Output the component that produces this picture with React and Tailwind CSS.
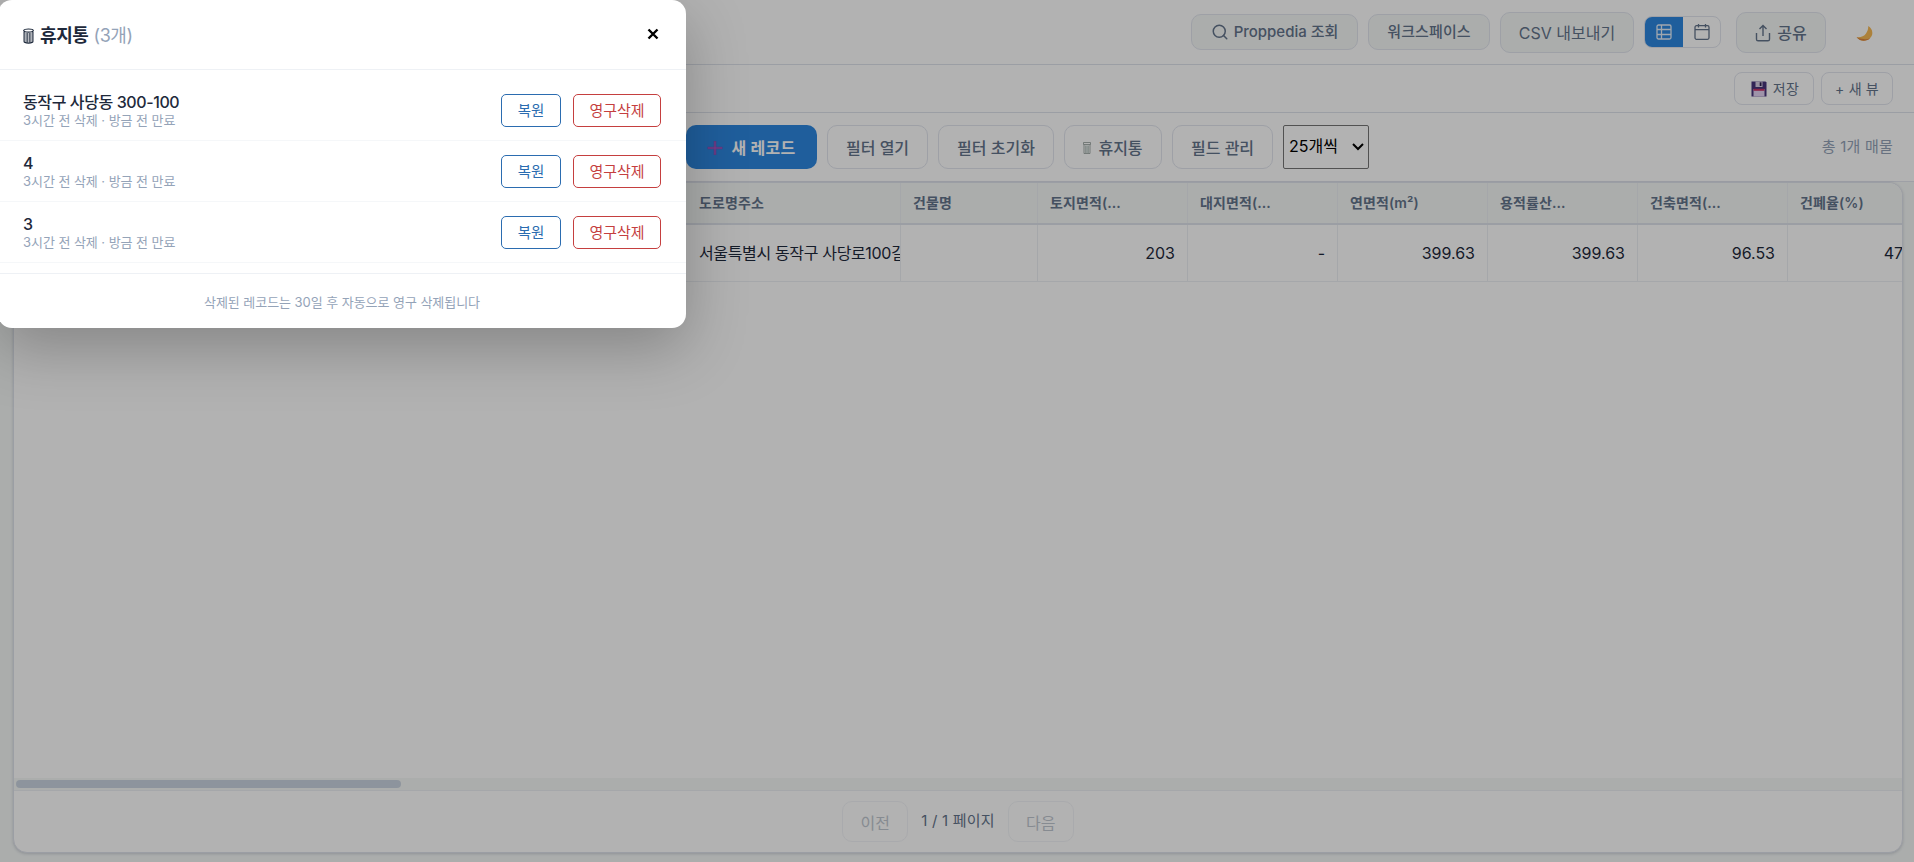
import React from "react";
import clsx from "clsx";
import { LuSearch } from "react-icons/lu";

const columns = [
  { label: "도로명주소", value: "서울특별시 동작구 사당로100길 12", width: "w-[214px]" },
  { label: "건물명", value: "", width: "w-[137px]" },
  { label: "토지면적(...", value: "203", width: "w-[150px]", number: true },
  { label: "대지면적(...", value: "-", width: "w-[150px]", number: true },
  { label: "연면적(m²)", value: "399.63", width: "w-[150px]", number: true },
  { label: "용적률산...", value: "399.63", width: "w-[150px]", number: true },
  { label: "건축면적(...", value: "96.53", width: "w-[150px]", number: true },
  { label: "건폐율(%)", value: "47.55", width: "w-[150px]", number: true },
];

const trashItems = [
  { name: "동작구 사당동 300-100", info: "3시간 전 삭제 · 방금 전 만료" },
  { name: "4", info: "3시간 전 삭제 · 방금 전 만료" },
  { name: "3", info: "3시간 전 삭제 · 방금 전 만료" },
];

const TrashIcon = ({ className }) => (
  <svg viewBox="0 0 11 16" className={className} fill="none" stroke="currentColor">
    <ellipse cx="5.5" cy="2.6" rx="4.8" ry="1.6" strokeWidth="1.2" />
    <path d="M1.1 4v9.600c0 1.900 8.800 1.900 8.800 0V4" strokeWidth="1.2" />
    <path d="M3.100 5v9.300M4.700 5v9.600M6.300 5v9.600M7.900 5v9.300" strokeWidth=".9" />
  </svg>
);

const SmallTrashIcon = () => (
  <svg viewBox="0 0 8 12" className="h-3 w-2" fill="none" stroke="#8f9a98" strokeWidth=".8">
    <path d="M.5.500h7v2h-7zM1 2.500v9h6v-9" />
    <path d="M2.700 3.500v7.500M4 3.500v7.500M5.300 3.500v7.500" stroke="#9fb0ab" />
  </svg>
);

const PlusIcon = () => (
  <svg viewBox="0 0 16 16" className="h-4 w-4">
    <path d="M8 1v14M.500 8h15" stroke="#7c50b4" strokeWidth="2.6" />
    <path d="M8 1.500v13M1 8h14" stroke="#b05ac8" strokeWidth="1" />
  </svg>
);

const FloppyIcon = () => (
  <svg viewBox="0 0 16 16" className="h-4 w-4">
    <path d="M.5.500h14l1 1v14H.5z" fill="#48347c" />
    <path d="M4.500.500h7v5.500h-7z" fill="#d9cfe6" />
    <path d="M8.700 1.300h1.800v3.700H8.700z" fill="#2c2050" />
    <path d="M2.500 8h11v7.500h-11z" fill="#e2d3f3" />
    <path d="M2.500 7.800h11v2h-11z" fill="#c83468" />
  </svg>
);

const MoonIcon = () => (
  <svg viewBox="0 0 17 17" className="h-[17px] w-[17px]">
    <path
      d="M12.200 1c3.600 2 5.300 6.500 3.300 10.300-2.600 5-10.500 6.300-14.900.9 4.300.4 7.400-.9 9.400-3.700 1.700-2.300 2.400-4.900 2.200-7.500z"
      fill="#f7b955"
    />
    <path d="M.6 12.200c3.900 4.800 10.500 4.300 13.700.8-2.200 1.200-4.400 1.500-6.800 1.100-2.400-.3-4.600-1-6.900-1.900z" fill="#dc8440" />
  </svg>
);

const TableIcon = () => (
  <svg viewBox="0 0 16 16" className="h-4 w-4" fill="none" stroke="currentColor" strokeWidth="1.3">
    <rect x="1" y="1" width="14" height="14" rx="1.5" />
    <path d="M1 5.500h14M1 10.500h14M5.500 1v14" />
  </svg>
);

const CalendarIcon = () => (
  <svg viewBox="0 0 16 16" className="h-4 w-4" fill="none" stroke="currentColor" strokeWidth="1.3">
    <rect x="1" y="1.700" width="14" height="13.600" rx="1.500" />
    <path d="M1 5.600h14M4.500 0v3.500M11.500 0v3.500" />
  </svg>
);

const ShareIcon = () => (
  <svg viewBox="0 0 16 18" className="h-[18px] w-4" fill="none" stroke="currentColor" strokeWidth="1.400">
    <path d="M1.500 9v6.200c0 1 .6 1.600 1.600 1.600h9.800c1 0 1.600-.6 1.600-1.600V9M8 12V1.500M4.500 5 8 1.500 11.500 5" />
  </svg>
);

const Button = ({ className, children }) => (
  <button
    className={clsx(
      "flex shrink-0 items-center justify-center whitespace-nowrap border border-[#e2e5ee] text-[#64748b]",
      className
    )}
  >
    {children}
  </button>
);

const TopBar = () => (
  <header className="flex h-[65px] shrink-0 items-center border-b border-[#dfe2eb] bg-white pr-[41px]">
    <div className="ml-auto flex items-center">
      <Button className="h-9 w-[167px] gap-[5px] rounded-[10px] bg-[#f5f8f7] text-[15px] font-medium">
        <LuSearch className="h-[18px] w-[18px]" />
        Proppedia 조회
      </Button>
      <Button className="ml-2.5 h-9 w-[122px] rounded-[10px] bg-[#f5f8f7] text-[15px] font-medium tracking-[0.1px]">
        워크스페이스
      </Button>
      <Button className="ml-2.5 h-[41px] w-[134px] rounded-[10px] bg-[#f5f8f7] pt-0.5 text-base">
        CSV 내보내기
      </Button>
      <div className="ml-2.5 flex h-8 w-[77px] overflow-hidden rounded-lg border border-[#e2e5ee] text-[#64748b]">
        <div className="flex w-[38px] items-center justify-center bg-[#2d87e0] text-[#e6f0fa]">
          <TableIcon />
        </div>
        <div className="flex flex-1 items-center justify-center">
          <CalendarIcon />
        </div>
      </div>
      <Button className="ml-[15px] h-[41px] w-[90px] gap-1.5 rounded-[10px] bg-[#f5f8f7] pt-0.5 text-base font-medium">
        <ShareIcon />
        공유
      </Button>
      <div className="ml-[30px] pt-0.5">
        <MoonIcon />
      </div>
    </div>
  </header>
);

const ViewBar = () => (
  <div className="flex h-12 shrink-0 items-center justify-end gap-[7px] border-b border-[#dfe2eb] bg-white pr-[21px]">
    <Button className="h-[33px] w-20 gap-1.5 rounded-lg pl-0.5 text-sm tracking-[0.3px]">
      <FloppyIcon />
      저장
    </Button>
    <Button className="h-[33px] w-[72px] rounded-lg text-sm tracking-[0.2px]">+ 새 뷰</Button>
  </div>
);

const Toolbar = () => (
  <div className="flex h-[69px] shrink-0 items-center border-b border-[#e2e5ee] bg-white pl-[686px] pr-[21px]">
    <button className="flex h-11 w-[131px] shrink-0 items-center justify-center gap-2 rounded-[10px] bg-[#2d87e0] pt-0.5 text-base font-bold tracking-[0.3px] text-white">
      <PlusIcon />새 레코드
    </button>
    <Button className="ml-2.5 h-11 w-[101px] rounded-[10px] pt-0.5 text-base font-medium">필터 열기</Button>
    <Button className="ml-2.5 h-11 w-[116px] rounded-[10px] pt-0.5 text-base font-medium">필터 초기화</Button>
    <Button className="ml-2.5 h-11 w-[98px] gap-[7px] rounded-[10px] pt-0.5 text-base font-medium">
      <SmallTrashIcon />
      휴지통
    </Button>
    <Button className="ml-2.5 h-11 w-[101px] rounded-[10px] pt-0.5 text-base font-medium">필드 관리</Button>
    <div className="ml-2.5 flex h-11 w-[86px] shrink-0 items-center justify-between rounded-[2px] border border-[#767676] pl-[5px] pr-1 text-base text-black">
      <span className="pb-0.5">25개씩</span>
      <svg viewBox="0 0 12 8" className="h-2 w-3" fill="none" stroke="black" strokeWidth="2">
        <path d="m1 1 5 5 5-5" />
      </svg>
    </div>
    <span className="ml-auto text-[15px] tracking-[0.2px] text-[#94a3b8]">총 1개 매물</span>
  </div>
);

const DataTable = () => (
  <div className="flex min-h-0 flex-1 bg-[#f5f8f7] pb-[9px] pl-[13px] pr-[11px]">
    <div className="flex w-full flex-col overflow-hidden rounded-[14px] border border-[#dfe2eb] bg-white shadow-[0_1px_3px_rgba(30,40,70,0.18)]">
      <div className="flex h-[42px] shrink-0 overflow-hidden border-b-2 border-[#dfe2eb] bg-[#f5f8f7]">
        <div className="w-[673px] shrink-0" />
        {columns.map((col) => (
          <div
            key={col.label}
            className={clsx(
              "flex shrink-0 items-center whitespace-nowrap border-r border-[#eceff4] pb-px pl-3 text-sm font-semibold tracking-[0.1px] text-[#64748b]",
              col.width
            )}
          >
            {col.label}
          </div>
        ))}
      </div>
      <div className="flex h-[57px] shrink-0 overflow-hidden border-b border-[#eceff4]">
        <div className="w-[673px] shrink-0" />
        {columns.map((col) => (
          <div
            key={col.label}
            className={clsx(
              "flex shrink-0 items-center overflow-hidden whitespace-nowrap border-r border-[#eceff4] pl-3 text-base text-[#1e293b]",
              col.width,
              col.number ? "justify-end pr-3" : "tracking-[-0.35px]"
            )}
          >
            {col.value}
          </div>
        ))}
      </div>
      <div className="flex-1" />
      <div className="h-3 shrink-0 bg-[#f5f8f7] p-0.5">
        <div className="h-2 w-[385px] rounded-full bg-[#cbd5e1]" />
      </div>
      <div className="flex h-[62px] shrink-0 items-center justify-center gap-[13px] border-t border-[#eceff4] text-base text-[#64748b]">
        <Button className="h-[41px] w-[66px] rounded-[10px] pt-0.5 opacity-40">이전</Button>
        <span className="text-[15px] tracking-[0.2px]">1 / 1 페이지</span>
        <Button className="h-[41px] w-[66px] rounded-[10px] pt-0.5 opacity-40">다음</Button>
      </div>
    </div>
  </div>
);

const TrashModal = () => (
  <div className="-ml-0.5 h-[328px] w-[688px] overflow-hidden rounded-[14px] bg-white shadow-[0_20px_60px_rgba(0,0,0,0.25)]">
    <div className="flex h-[70px] items-center justify-between border-b border-[#eef1f5] pl-[25px] pr-[27px]">
      <h3 className="flex items-center pt-0.5 text-lg font-bold tracking-[-0.4px] text-[#1e293b]">
        <TrashIcon className="mr-1.5 h-4 w-[11px]" />
        휴지통
        <span className="ml-[5px] font-normal text-[#94a3b8]">(3개)</span>
      </h3>
      <svg viewBox="0 0 12 12" className="mb-0.5 h-3 w-3" stroke="black" strokeWidth="2.4">
        <path d="m1.500 1.500 9 9M10.500 1.500l-9 9" />
      </svg>
    </div>
    <div className="pb-2.5 pt-2.5">
      {trashItems.map((item) => (
        <div
          key={item.name}
          className="flex h-[61px] items-center border-b border-[#f5f7f9] pl-[25px] pr-[25px]"
        >
          <div className="mr-auto pt-px">
            <div className="text-base leading-[18px] font-medium tracking-[-0.4px] text-[#1e293b]">
              {item.name}
            </div>
            <div className="text-[13px] leading-[18px] tracking-[-0.05px] text-[#94a3b8]">{item.info}</div>
          </div>
          <button className="h-[33px] w-[60px] rounded-[5px] border border-[#2b6cb0] pt-0.5 text-[14.5px] text-[#2b6cb0]">
            복원
          </button>
          <button className="ml-3 h-[33px] w-[88px] rounded-[5px] border border-[#c53f3f] pt-0.5 text-[15px] text-[#c53f3f]">
            영구삭제
          </button>
        </div>
      ))}
    </div>
    <div className="flex h-[55px] items-center justify-center border-t border-[#eef1f5] pt-1 text-[13px] tracking-[-0.05px] text-[#94a3b8]">
      삭제된 레코드는 30일 후 자동으로 영구 삭제됩니다
    </div>
  </div>
);

export default function App() {
  return (
    <div className="relative flex h-[862px] w-full flex-col overflow-hidden font-['Inter','Noto_Sans_CJK_KR',sans-serif]">
      <TopBar />
      <ViewBar />
      <Toolbar />
      <DataTable />
      <div className="absolute inset-0 bg-black/30">
        <TrashModal />
      </div>
    </div>
  );
}
